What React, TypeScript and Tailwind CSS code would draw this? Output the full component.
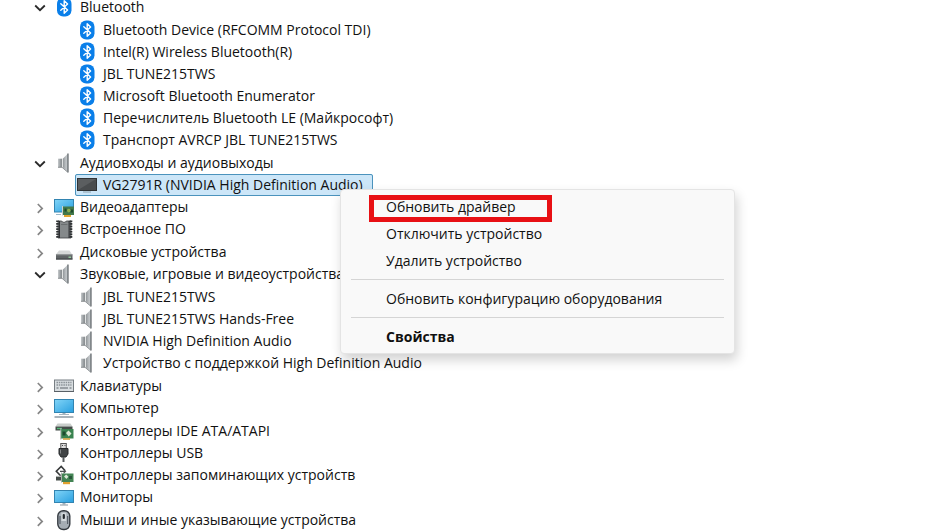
import { useState } from "react";
import type { ReactNode } from "react";
import clsx from "clsx";

type IconName =
  | "bluetooth"
  | "speaker"
  | "screen"
  | "display-adapter"
  | "firmware"
  | "disk"
  | "keyboard"
  | "computer"
  | "ide"
  | "usb"
  | "storage"
  | "monitor"
  | "mouse";

interface DeviceGroup {
  label: string;
  icon: IconName;
  open?: boolean;
  devices?: { label: string; icon: IconName }[];
}

const groups: DeviceGroup[] = [
  {
    label: "Bluetooth",
    icon: "bluetooth",
    open: true,
    devices: [
      { label: "Bluetooth Device (RFCOMM Protocol TDI)", icon: "bluetooth" },
      { label: "Intel(R) Wireless Bluetooth(R)", icon: "bluetooth" },
      { label: "JBL TUNE215TWS", icon: "bluetooth" },
      { label: "Microsoft Bluetooth Enumerator", icon: "bluetooth" },
      { label: "Перечислитель Bluetooth LE (Майкрософт)", icon: "bluetooth" },
      { label: "Транспорт AVRCP JBL TUNE215TWS", icon: "bluetooth" },
    ],
  },
  {
    label: "Аудиовходы и аудиовыходы",
    icon: "speaker",
    open: true,
    devices: [{ label: "VG2791R (NVIDIA High Definition Audio)", icon: "screen" }],
  },
  { label: "Видеоадаптеры", icon: "display-adapter" },
  { label: "Встроенное ПО", icon: "firmware" },
  { label: "Дисковые устройства", icon: "disk" },
  {
    label: "Звуковые, игровые и видеоустройства",
    icon: "speaker",
    open: true,
    devices: [
      { label: "JBL TUNE215TWS", icon: "speaker" },
      { label: "JBL TUNE215TWS Hands-Free", icon: "speaker" },
      { label: "NVIDIA High Definition Audio", icon: "speaker" },
      { label: "Устройство с поддержкой High Definition Audio", icon: "speaker" },
    ],
  },
  { label: "Клавиатуры", icon: "keyboard" },
  { label: "Компьютер", icon: "computer" },
  { label: "Контроллеры IDE ATA/ATAPI", icon: "ide" },
  { label: "Контроллеры USB", icon: "usb" },
  { label: "Контроллеры запоминающих устройств", icon: "storage" },
  { label: "Мониторы", icon: "monitor" },
  { label: "Мыши и иные указывающие устройства", icon: "mouse" },
];

// 20x22 drawings, one per device class
const drawings: Record<IconName, ReactNode> = {
  bluetooth: (
    <>
      <rect x="3" y="1.5" width="14.5" height="19" rx="6.2" fill="#0a7fe9" />
      <path d="M6.8 7.8l6.8 6.2-3.4 3.2V4.8L13.6 8l-6.8 6.2" fill="none" stroke="#fff" strokeWidth="1.4" strokeLinejoin="round" strokeLinecap="round" />
    </>
  ),
  speaker: (
    <>
      <rect x="4" y="6.7" width="4" height="8.6" fill="url(#magnet)" />
      <path d="M8.5 7L14 1.5v19L8.5 15z" fill="url(#cone)" />
      <path d="M14 1.5v19" stroke="#74797d" strokeWidth="1.4" />
      <path d="M8.4 7v8" stroke="#eceeef" strokeWidth=".8" />
      <path d="M4 15.3h4L13.5 20" fill="none" stroke="#777c80" strokeWidth=".8" />
    </>
  ),
  screen: (
    <>
      <rect x=".5" y="4.5" width="19" height="12" fill="#5b5e60" stroke="#303335" />
      <path d="M1 16L19 5v11z" fill="#494c4e" />
      <path d="M6 18h8" stroke="#8fa2ad" />
    </>
  ),
  "display-adapter": (
    <>
      <rect x=".5" y="3.5" width="19" height="12.5" fill="url(#glass)" stroke="#3284b1" />
      <path d="M9 10.5h11v8.5H9z" fill="#43794b" />
      <path d="M8.5 10v9.5" stroke="#cbd0cd" />
      <path d="M10.5 12.5h2v3h-2zM16.5 13.5H19v3h-2.5z" fill="#1e4a2c" />
      <circle cx="14.8" cy="14.6" r="1.8" fill="#8daf52" />
      <path d="M10 19h7v2h-7z" fill="#e2a630" />
      <path d="M2 18.5h5" stroke="#9ab8c8" />
    </>
  ),
  firmware: (
    <>
      <path d="M4 3h3.7c.6 1.8 4 1.8 4.6 0H17v17H4z" fill="#85898b" stroke="#3c3f41" strokeWidth=".8" />
      <path d="M3.5 2.5v18M17 2.5v18" stroke="#2f3234" strokeWidth="2.6" strokeDasharray="1.6 1" />
      <path d="M5.4 3v17M15.1 3v17" stroke="#25282a" />
      <path d="M7 6.5h6.5" stroke="#6b6f71" />
    </>
  ),
  disk: (
    <>
      <path d="M5 9.5h10.5l3 4.5h-17z" fill="#d6d8d8" />
      <path d="M2 13.5h16.5v5H2z" fill="#5f6365" />
      <path d="M2 13.8h16.5" stroke="#8f9394" />
      <path d="M2 18h16.5" stroke="#3f4345" />
      <path d="M14.5 16.2h2.5" stroke="#9fe0a5" strokeWidth="1.2" />
    </>
  ),
  keyboard: (
    <>
      <rect x=".5" y="5" width="19" height="11.5" fill="#d8dde0" stroke="#777e83" />
      <path d="M2.5 7.5h15M2.5 10h15" stroke="#8b9297" strokeWidth="1.4" strokeDasharray="1.5 .8" />
      <path d="M2.5 13h2M6 13h8M15.5 13h2" stroke="#858c91" strokeWidth="1.4" />
      <path d="M0 16.5h20" stroke="#596066" />
    </>
  ),
  computer: (
    <>
      <rect x=".5" y="2.5" width="19" height="13" fill="url(#glass)" stroke="#3284b1" />
      <path d="M8.5 16h3v1.5h-3z" fill="#9eb0bb" />
      <path d="M5 17.5h10" stroke="#a9b7c0" />
      <path d="M.5 20h19" stroke="#84929c" strokeWidth="1.4" />
    </>
  ),
  ide: (
    <>
      <path d="M3.5 3.5h13l2 3H1.5z" fill="#c9cecb" />
      <path d="M1.5 6.5h17v4h-17z" fill="#454c49" />
      <path d="M3 8.5h5" stroke="#54b878" strokeWidth="1.4" />
      <path d="M7 9h12.5v9.5H7z" fill="#3a8350" />
      <path d="M6.8 8v11.5" stroke="#a9b3ac" />
      <path d="M8.5 11.5h3v4h-3z" fill="#1d4a2e" />
      <path d="M12 13l2.5-2.5 3 3-2.8 3z" fill="#dce8d4" />
      <path d="M9 19h7" stroke="#d1a441" strokeWidth="1.6" />
    </>
  ),
  usb: (
    <>
      <rect x="6.8" y="1.5" width="5.5" height="5" fill="#ddd" stroke="#555" />
      <path d="M8 3.5h1M10.5 3.5h1" stroke="#444" strokeWidth="1.2" />
      <path d="M5 6.5h9V12l-2 3H7l-2-3z" fill="#414446" stroke="#292b2d" />
      <path d="M6.5 7.5v4" stroke="#858889" />
      <path d="M9.5 15v5" stroke="#565a5c" strokeWidth="2" />
    </>
  ),
  storage: (
    <>
      <path d="M11 6.5L7.2 2.5 2.3 7.2l4.3 4.6" fill="none" stroke="#36393a" strokeWidth="1.6" />
      <path d="M6 7.3h5.5m-2-2l2 2-2 2" fill="none" stroke="#4c5052" strokeWidth="1.2" />
      <path d="M2 12.5h6v4H2z" fill="#454c48" />
      <path d="M2.5 12.3h5" stroke="#b8bdba" />
      <path d="M7.5 9.5h12V18h-12z" fill="#438454" />
      <path d="M7.5 8.5v10" stroke="#a8afaa" />
      <path d="M10 12.5l2.2-2 2.2 2.2-2 2.2z" fill="#dce8d8" />
      <path d="M15 12h3v3h-3z" fill="#28563a" />
      <path d="M9 18h7v2.2H9z" fill="#e0a130" />
    </>
  ),
  monitor: (
    <>
      <rect x=".5" y="4.5" width="19" height="12" fill="url(#glass)" stroke="#3284b1" />
      <path d="M8.5 17h3v1.5h-3z" fill="#9eb0bb" />
      <path d="M6 19h8" stroke="#8996a0" />
    </>
  ),
  mouse: (
    <>
      <rect x="3.8" y="1.7" width="12" height="18.8" rx="5.4" fill="#a5adb4" stroke="#343a40" strokeWidth="1.4" />
      <path d="M6 7v8M13.6 7v8" stroke="#59616a" strokeWidth="1.2" />
      <path d="M7.3 3.7V12h5V3.7z" fill="#d2d8dc" />
      <rect x="8.7" y="5" width="2.2" height="5" rx="1" fill="#23282d" />
    </>
  ),
};

function DeviceIcon({ name }: { name: IconName }) {
  return (
    <svg viewBox="0 0 20 22" className="h-[22px] w-5 shrink-0" aria-hidden="true">
      {drawings[name]}
    </svg>
  );
}

function Chevron({ open }: { open: boolean }) {
  return (
    <svg viewBox="0 0 12 22" className="h-[22px] w-3 shrink-0" fill="none" aria-hidden="true">
      {open ? (
        <path d="M1.2 9.5L6 14.2l4.8-4.7" stroke="#2a2a2a" strokeWidth="1.8" />
      ) : (
        <path d="M3.8 8l4.4 4.4-4.4 4.4" stroke="#868686" strokeWidth="1.7" />
      )}
    </svg>
  );
}

function DeviceTree() {
  const [opened, setOpened] = useState(groups.map((g) => !!g.open));
  const [selected, setSelected] = useState("1-0");

  const toggle = (index: number) =>
    setOpened(opened.map((value, i) => (i === index ? !value : value)));

  return (
    <ul className="-mt-1 pl-[34px] [&>li:nth-child(4n)]:mb-px">
      {groups.map((group, i) => (
        <li key={group.label}>
          <button
            type="button"
            aria-expanded={opened[i]}
            onClick={() => toggle(i)}
            className="flex items-center gap-2"
          >
            <Chevron open={opened[i]} />
            <span className="flex items-center gap-1.5">
              <DeviceIcon name={group.icon} />
              {group.label}
            </span>
          </button>
          {opened[i] && group.devices && (
            <ul className={clsx("pl-[43px]", group.devices.length > 1 && "py-px")}>
              {group.devices.map((device, j) => (
                <li key={device.label} className="flex">
                  <button
                    type="button"
                    onClick={() => setSelected(`${i}-${j}`)}
                    className={clsx(
                      "-ml-0.5 flex items-center gap-1.5 rounded-xs pr-2.5 pl-0.5",
                      selected === `${i}-${j}` && "bg-[#cce6f8] outline -outline-offset-1 outline-[#4b93bd]"
                    )}
                  >
                    <DeviceIcon name={device.icon} />
                    {device.label}
                  </button>
                </li>
              ))}
            </ul>
          )}
        </li>
      ))}
    </ul>
  );
}

function MenuItem({ children, bold }: { children: ReactNode; bold?: boolean }) {
  return (
    <button
      type="button"
      role="menuitem"
      className={clsx("block w-full pl-[35px] text-left leading-[27px] hover:bg-gray-100", bold && "font-bold")}
    >
      {children}
    </button>
  );
}

function ContextMenu() {
  return (
    <div
      role="menu"
      className="absolute top-[189px] left-[340px] w-[395px] rounded-sm border border-[#e4e4e4] bg-[#f9f9f9] px-2.5 py-[3px] text-[#111] shadow-[2px_6px_12px_rgba(0,0,0,0.18)]"
    >
      <MenuItem>Обновить драйвер</MenuItem>
      <MenuItem>Отключить устройство</MenuItem>
      <MenuItem>Удалить устройство</MenuItem>
      <hr className="my-[5px] border-[#d5d5d5]" />
      <MenuItem>Обновить конфигурацию оборудования</MenuItem>
      <hr className="my-[5px] border-[#d5d5d5]" />
      <MenuItem bold>Свойства</MenuItem>
      <div className="pointer-events-none absolute top-[5px] left-7 h-[27px] w-[183px] border-5 border-[#e81014]" />
    </div>
  );
}

export default function App() {
  return (
    <main className="relative min-h-screen overflow-hidden bg-white font-['Open_Sans','Noto_Sans',sans-serif] text-[14px] leading-[22px] whitespace-nowrap text-[#111]">
      <svg className="absolute size-0" aria-hidden="true">
        <defs>
          <linearGradient id="glass" x1="0" y1="0" x2="1" y2="1">
            <stop offset="0" stopColor="#82d5f8" />
            <stop offset="1" stopColor="#299fdf" />
          </linearGradient>
          <linearGradient id="cone">
            <stop offset="0" stopColor="#8b9093" />
            <stop offset="0.7" stopColor="#c3c7ca" />
            <stop offset="1" stopColor="#999ea2" />
          </linearGradient>
          <linearGradient id="magnet">
            <stop offset="0" stopColor="#c6cacc" />
            <stop offset="1" stopColor="#7b8084" />
          </linearGradient>
        </defs>
      </svg>
      <DeviceTree />
      <ContextMenu />
    </main>
  );
}
